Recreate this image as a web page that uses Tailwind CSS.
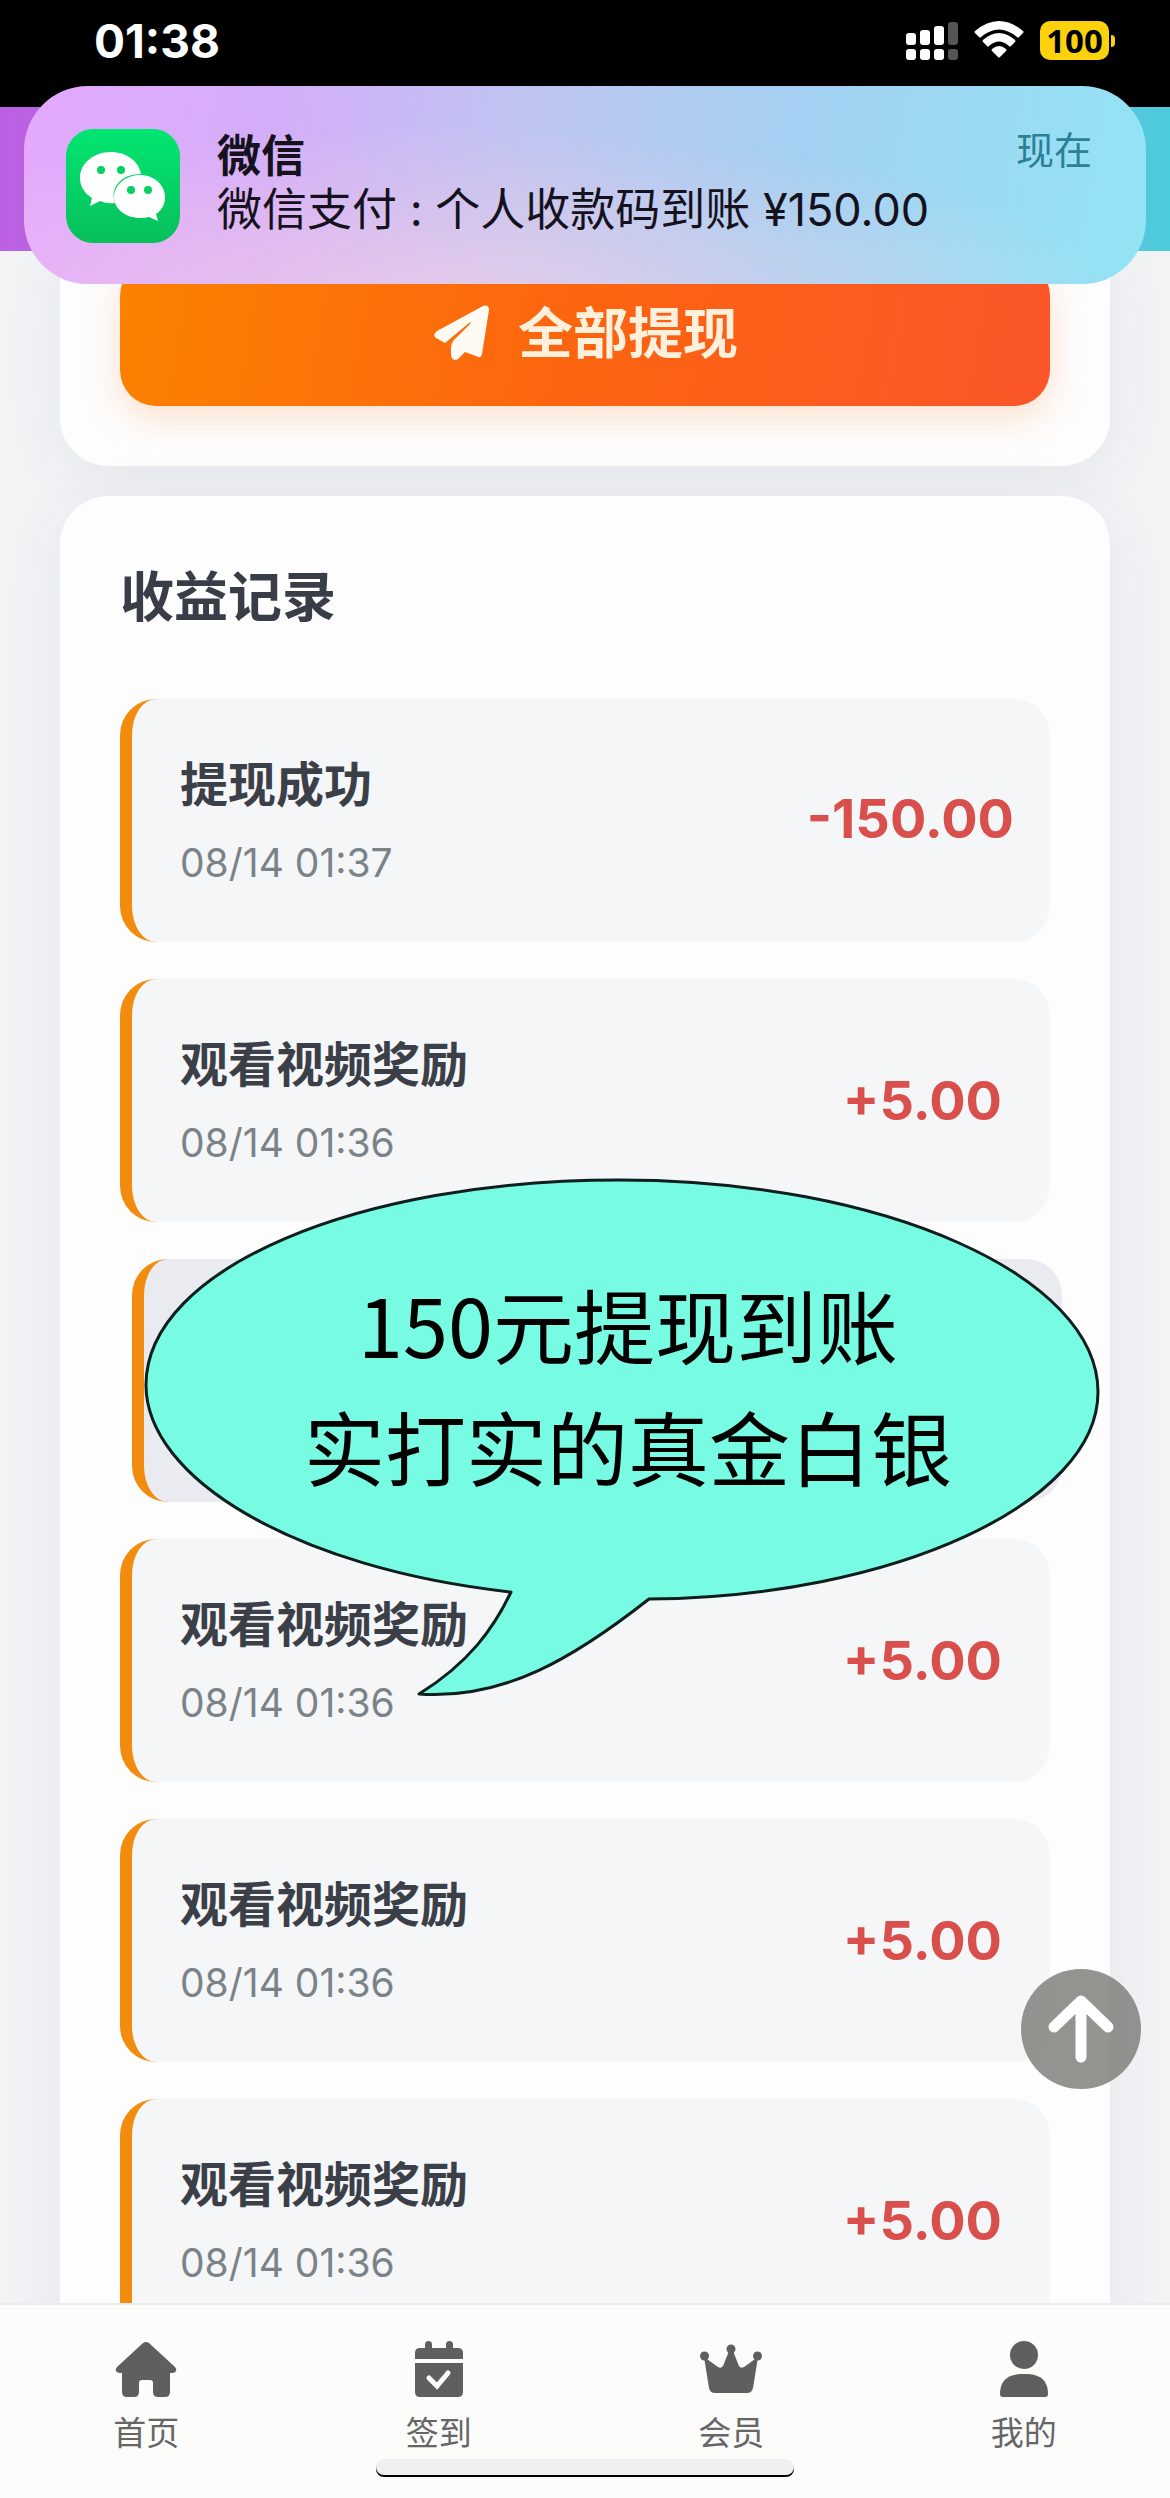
<!DOCTYPE html>
<html lang="zh-CN">
<head>
<meta charset="utf-8">
<meta name="viewport" content="width=device-width, initial-scale=1">
<title>收益记录</title>
<script src="https://cdn.jsdelivr.net/npm/@tailwindcss/browser@4"></script>
</head>
<body class="bg-[#f1f3f5] font-['Inter','Noto_Sans_CJK_SC',sans-serif]">
<div class="relative flex h-screen flex-col overflow-hidden">

  <!-- status bar -->
  <header class="flex h-[107px] shrink-0 items-start justify-between bg-black pr-[55px] pl-[94px] pt-[21px] text-white">
    <time class="text-[46px] leading-[40px] font-bold">01:38</time>
    <div class="flex items-start gap-4">
      <svg class="h-10 w-[52px]" viewBox="0 0 52 40" fill="#fff" aria-label="信号">
        <rect x="0" y="12" width="10" height="12" rx="3"/><rect x="14" y="9" width="10" height="15" rx="3"/><rect x="28" y="5" width="10" height="19" rx="3"/><rect x="42" y="1" width="10" height="23" rx="3" fill="#555"/>
        <rect x="0" y="28" width="10" height="11" rx="3"/><rect x="14" y="28" width="10" height="11" rx="3"/><rect x="28" y="28" width="10" height="11" rx="3"/><rect x="42" y="28" width="10" height="11" rx="3" fill="#555"/>
      </svg>
      <svg class="h-10 w-[50px]" viewBox="0 0 50 40" fill="#fff" aria-label="无线网络">
        <path d="M1 10Q25-10 49 10Q50 11 49 12L45 16Q44 17 43 16Q25 1 7 16Q6 17 5 16L1 12Q0 11 1 10Z"/>
        <path d="M9 19Q25 5 41 19Q42 20 41 21L37 25Q36 26 35 25Q25 16 15 25Q14 26 13 25L9 21Q8 20 9 19Z"/>
        <path d="M18 28Q25 22 32 28Q33 29 32 30L26 36Q25 37 24 36L18 30Q17 29 18 28Z"/>
      </svg>
      <div class="flex items-center gap-[2px]">
        <span class="flex h-[39px] w-[69px] items-center justify-center rounded-[10px] bg-[#fbd20b] font-['Noto_Sans',sans-serif] text-[33px] leading-none font-bold text-black">100</span>
        <span class="h-3 w-1 rounded-r-full bg-[#fbd20b]"></span>
      </div>
    </div>
  </header>

  <!-- incoming message banner -->
  <section class="absolute inset-x-6 top-[86px] z-20 flex h-[198px] gap-[37px] rounded-[64px] bg-linear-[100deg,#e5a9fd_0%,#d3aef8_22%,#bdc5f1_45%,#a3d0f2_68%,#92e4f5_100%] px-[42px] pt-[43px]">
    <div class="absolute inset-0 rounded-[64px] bg-[radial-gradient(ellipse_60%_90%_at_38%_110%,#ffd0e299,#ffd0e200)]"></div>
    <svg class="relative size-[114px] shrink-0" viewBox="0 0 114 114" aria-label="微信">
      <defs><linearGradient id="wx" x2="0" y2="1"><stop stop-color="#02e671"/><stop offset="1" stop-color="#08bf5b"/></linearGradient></defs>
      <rect width="114" height="114" rx="27" fill="url(#wx)"/>
      <path fill="#fff" d="M45 23C28 23 14 34 14 49C14 57 18 64 26 69L24 77L34 72Q41 75 49 74Q46 66 49 59Q56 45 75 45C73 32 60 23 45 23Z"/>
      <path fill="#fff" d="M74 46C88 46 99 56 99 68C99 75 96 81 90 85L92 92L83 88Q79 89 74 89C60 89 48 80 48 68C48 56 60 46 74 46Z"/>
      <g fill="#08d164"><circle cx="35" cy="41" r="4"/><circle cx="55" cy="41" r="4"/><circle cx="65" cy="61" r="4"/><circle cx="82" cy="61" r="4"/></g>
    </svg>
    <div class="relative min-w-0 flex-1 text-[#15121d]">
      <h2 class="text-[44px] leading-[54px] font-bold">微信</h2>
      <p class="text-[45px] leading-[54px] whitespace-nowrap">微信支付 : 个人收款码到账 ¥150.00</p>
    </div>
    <time class="relative mr-3 text-[38px] leading-[42px] text-[#2c8095]">现在</time>
  </section>

  <main class="relative flex-1 overflow-hidden">
    <div class="h-36 bg-linear-to-r from-[#bb5fe2] to-[#4ccbdc]"></div>

    <section class="mx-[60px] rounded-b-[48px] bg-[#fdfdfd] px-[60px] pt-[9px] pb-[60px] shadow-[0_10px_60px_rgba(70,90,110,0.07)]">
      <button type="button" class="flex h-[146px] w-full items-center justify-center gap-7 rounded-[36px] bg-linear-[100deg,#fb8100,#fc6410_50%,#fb5529] text-[55px] font-bold text-[#fff0dc] shadow-[0_12px_36px_rgba(255,140,60,0.25)]">
        <svg class="size-[58px]" viewBox="0 0 58 58" fill="#fffaf2" aria-hidden="true">
          <path d="M51 2Q57 0 57 6L50 50Q49 55 44 52L33 48L26 55Q20 58 19 51V44Q19 40 21 37L38 20Q40 17 37 19L13 39L4 34Q0 31 5 27Z"/>
        </svg>
        全部提现
      </button>
    </section>

    <section class="mx-[60px] mt-[30px] h-[2000px] rounded-[48px] bg-[#fdfdfd] px-[60px] pt-[72px] shadow-[0_10px_60px_rgba(70,90,110,0.07)]">
      <h1 class="mb-[71px] text-[54px] leading-[60px] font-bold text-[#383d48]">收益记录</h1>
      <ul class="flex flex-col gap-[37px] text-[#3b4048]">
        <li class="flex h-[243px] items-center justify-between rounded-[36px] border-l-[12px] border-[#f28c0f] bg-[#f5f6f7] pr-9 pl-12">
          <div class="flex flex-col gap-6">
            <h3 class="text-[48px] leading-[60px] font-bold">提现成功</h3>
            <time class="text-[39px] leading-[48px] text-[#7b8288]">08/14 01:37</time>
          </div>
          <span class="pb-1 text-[54px] font-bold text-[#d84f4c]">-150.00</span>
        </li>
        <li class="flex h-[243px] items-center justify-between rounded-[36px] border-l-[12px] border-[#f28c0f] bg-[#f5f6f7] pr-12 pl-12">
          <div class="flex flex-col gap-6">
            <h3 class="text-[48px] leading-[60px] font-bold">观看视频奖励</h3>
            <time class="text-[39px] leading-[48px] text-[#7b8288]">08/14 01:36</time>
          </div>
          <span class="text-[54px] font-bold text-[#d84f4c]">+5.00</span>
        </li>
        <!-- pressed row, slid to the right -->
        <li class="-mr-3 ml-3 h-[243px] rounded-[36px] border-l-[12px] border-[#f28c0f] bg-[#e9ebf0]"></li>
        <li class="flex h-[243px] items-center justify-between rounded-[36px] border-l-[12px] border-[#f28c0f] bg-[#f5f6f7] pr-12 pl-12">
          <div class="flex flex-col gap-6">
            <h3 class="text-[48px] leading-[60px] font-bold">观看视频奖励</h3>
            <time class="text-[39px] leading-[48px] text-[#7b8288]">08/14 01:36</time>
          </div>
          <span class="text-[54px] font-bold text-[#d84f4c]">+5.00</span>
        </li>
        <li class="flex h-[243px] items-center justify-between rounded-[36px] border-l-[12px] border-[#f28c0f] bg-[#f5f6f7] pr-12 pl-12">
          <div class="flex flex-col gap-6">
            <h3 class="text-[48px] leading-[60px] font-bold">观看视频奖励</h3>
            <time class="text-[39px] leading-[48px] text-[#7b8288]">08/14 01:36</time>
          </div>
          <span class="text-[54px] font-bold text-[#d84f4c]">+5.00</span>
        </li>
        <li class="flex h-[243px] items-center justify-between rounded-[36px] border-l-[12px] border-[#f28c0f] bg-[#f5f6f7] pr-12 pl-12">
          <div class="flex flex-col gap-6">
            <h3 class="text-[48px] leading-[60px] font-bold">观看视频奖励</h3>
            <time class="text-[39px] leading-[48px] text-[#7b8288]">08/14 01:36</time>
          </div>
          <span class="text-[54px] font-bold text-[#d84f4c]">+5.00</span>
        </li>
      </ul>
    </section>
  </main>

  <!-- speech bubble -->
  <aside class="absolute top-[1178px] left-1/2 z-10 ml-[-441px] h-[520px] w-[956px]">
    <svg class="absolute inset-0 size-full" viewBox="0 0 956 520" aria-hidden="true">
      <path fill="#78fbe3" stroke="#0c1f1d" stroke-width="3" stroke-linejoin="round" d="M367 414C150 390 2 300 2 207C2 90 215 2 475 2C740 2 954 98 954 214C954 325 750 419 505 421C430 480 360 522 275 516C325 485 350 450 367 414Z"/>
    </svg>
    <p class="relative pt-[84px] pl-3 text-center text-[81px] leading-[122px] whitespace-nowrap text-black font-['Noto_Sans_CJK_SC',sans-serif]">150元提现到账<br>实打实的真金白银</p>
  </aside>

  <button type="button" aria-label="回到顶部" class="absolute right-[29px] bottom-[409px] z-10 flex size-[120px] items-center justify-center rounded-full bg-[#80807c]/85">
    <svg class="size-[68px]" viewBox="0 0 68 68" fill="none" stroke="#fff" stroke-width="11" stroke-linecap="round" stroke-linejoin="round"><path d="M34 62V6M7 32L34 6L61 32"/></svg>
  </button>

  <nav class="relative z-10 grid h-[195px] shrink-0 grid-cols-4 border-t-2 border-[#ececec] bg-[#fcfcfb] pt-9 text-[33px] leading-10 text-[#666]">
    <a href="#home" class="flex flex-col items-center gap-4">
      <svg class="h-14 w-[62px]" viewBox="0 0 62 56" fill="#5f5f5f" aria-hidden="true"><path d="M28 2Q31 0 34 2L60 26Q62 28 61 30Q60 32 57 32H55V51Q55 56 50 56H43Q38 56 38 51V42Q38 39 35 39H27Q24 39 24 42V51Q24 56 19 56H12Q7 56 7 51V32H5Q2 32 1 30Q0 28 2 26Z"/></svg>
      首页
    </a>
    <a href="#checkin" class="flex flex-col items-center gap-4">
      <svg class="h-14 w-12" viewBox="0 0 48 56" fill="#5f5f5f" aria-hidden="true"><path d="M10 7V3.500Q10 0 13.500 0T17 3.500V7H31V3.500Q31 0 34.500 0T38 3.500V7H43Q48 7 48 12V18H0V12Q0 7 5 7ZM0 22H48V51Q48 56 43 56H5Q0 56 0 51Z"/><path d="M14 37L22 45L33 32" fill="none" stroke="#fcfcfb" stroke-width="5" stroke-linecap="round"/></svg>
      签到
    </a>
    <a href="#member" class="flex flex-col items-center gap-4">
      <svg class="h-14 w-[62px]" viewBox="0 0 62 56" fill="#5f5f5f" aria-hidden="true"><circle cx="4.500" cy="15" r="4.500"/><circle cx="31" cy="8" r="4.500"/><circle cx="57.500" cy="15" r="4.500"/><path d="M4 16L18 26Q21 28 23 25L29 10H33L39 25Q41 28 44 26L58 16L53 47Q52 52 47 52H15Q10 52 9 47Z"/></svg>
      会员
    </a>
    <a href="#me" class="flex flex-col items-center gap-4">
      <svg class="h-14 w-12" viewBox="0 0 48 56" fill="#5f5f5f" aria-hidden="true"><circle cx="24" cy="14" r="14"/><path d="M20 33H28Q48 34 48 53Q48 56 45 56H3Q0 56 0 53Q0 34 20 33Z"/></svg>
      我的
    </a>
    <span class="absolute bottom-[23px] left-1/2 h-4 w-[418px] -translate-x-1/2 rounded-full bg-[#f0f0f0] shadow-[0_2px_0_#000]"></span>
  </nav>
</div>
</body>
</html>
